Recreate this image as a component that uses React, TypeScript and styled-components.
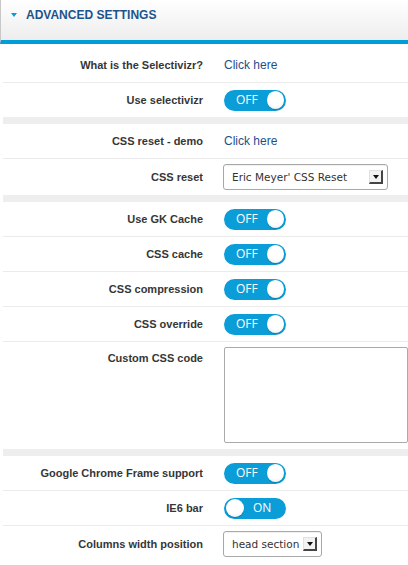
import React from 'react';
import styled, { createGlobalStyle } from 'styled-components';

const GlobalStyle = createGlobalStyle`
  html, body {
    margin: 0;
    padding: 0;
    background: #fff;
    overflow: hidden;
  }
  body {
    font-family: "Liberation Sans", Arial, sans-serif;
  }
`;

type Item =
  | { kind: 'link'; label: string }
  | { kind: 'toggle'; label: string; on?: boolean }
  | { kind: 'select'; label: string; value: string; width: number }
  | { kind: 'textarea'; label: string };

const sections: Item[][] = [
  [
    { kind: 'link', label: 'What is the Selectivizr?' },
    { kind: 'toggle', label: 'Use selectivizr' },
  ],
  [
    { kind: 'link', label: 'CSS reset - demo' },
    { kind: 'select', label: 'CSS reset', value: "Eric Meyer' CSS Reset", width: 165 },
  ],
  [
    { kind: 'toggle', label: 'Use GK Cache' },
    { kind: 'toggle', label: 'CSS cache' },
    { kind: 'toggle', label: 'CSS compression' },
    { kind: 'toggle', label: 'CSS override' },
    { kind: 'textarea', label: 'Custom CSS code' },
  ],
  [
    { kind: 'toggle', label: 'Google Chrome Frame support' },
    { kind: 'toggle', label: 'IE6 bar', on: true },
    { kind: 'select', label: 'Columns width position', value: 'head section', width: 99 },
  ],
];

const Toggle = ({ on }: { on?: boolean }) => (
  <Switch $on={on}>
    {on && <Knob />}
    <span>{on ? 'ON' : 'OFF'}</span>
    {!on && <Knob />}
  </Switch>
);

const Field = ({ item }: { item: Item }) => {
  switch (item.kind) {
    case 'link':
      return <Link href="#">Click here</Link>;
    case 'toggle':
      return <Toggle on={item.on} />;
    case 'select':
      return (
        <Select style={{ width: item.width }}>
          <span>{item.value}</span>
          <Arrow />
        </Select>
      );
    case 'textarea':
      return <TextArea />;
  }
};

const App = () => {
  return (
    <Panel>
      <GlobalStyle />
      <Header>
        <Caret />
        <Title>ADVANCED SETTINGS</Title>
      </Header>
      <Body>
        {sections.map((items, i) => (
          <Section key={i} $first={i === 0}>
            {items.map((item) => (
              <Row key={item.label} $tall={item.kind === 'select'} $top={item.kind === 'textarea'}>
                <Label $top={item.kind === 'textarea'}>{item.label}</Label>
                <Value>
                  <Field item={item} />
                </Value>
              </Row>
            ))}
          </Section>
        ))}
      </Body>
    </Panel>
  );
};

export default App;

const Panel = styled.div`
  width: 408px;
  height: 565px;
  overflow: hidden;
`;

const Header = styled.div`
  height: 44px;
  box-sizing: border-box;
  border-left: 1px solid #c8c8c8;
  border-bottom: 4px solid #009dd8;
  background: linear-gradient(#ffffff, #ededed);
  display: flex;
  align-items: center;
  padding: 0 0 10px 10px;
  gap: 9px;
`;

const Caret = styled.span`
  width: 0;
  height: 0;
  border-left: 3.5px solid transparent;
  border-right: 3.5px solid transparent;
  border-top: 4px solid #0a9bd6;
`;

const Title = styled.h2`
  margin: 0;
  font-size: 12px;
  line-height: 16px;
  font-weight: bold;
  color: #1b558c;
`;

const Body = styled.div`
  padding: 4px 0 0 3px;
`;

const Section = styled.div<{ $first?: boolean }>`
  border-top: ${(p) => (p.$first ? 'none' : '7px solid #eeeeee')};
  > div:last-child {
    border-bottom: none;
  }
`;

const Row = styled.div<{ $tall?: boolean; $top?: boolean }>`
  display: grid;
  grid-template-columns: 200px 184px;
  column-gap: 21px;
  align-items: ${(p) => (p.$top ? 'start' : 'center')};
  min-height: ${(p) => (p.$top ? 0 : p.$tall ? 36 : 34)}px;
  padding: ${(p) => (p.$top ? '5px 0 6px' : '0')};
  border-bottom: 1px solid #ebebeb;
`;

const Label = styled.div<{ $top?: boolean }>`
  text-align: right;
  font-size: 11px;
  line-height: 16px;
  font-weight: bold;
  color: #363636;
  margin-top: ${(p) => (p.$top ? '3px' : '0')};
  white-space: nowrap;
`;

const Value = styled.div`
  display: flex;
  align-items: center;
`;

const Link = styled.a`
  font-size: 12px;
  line-height: 16px;
  color: #1d4f8c;
  text-decoration: none;
`;

const Switch = styled.div<{ $on?: boolean }>`
  width: 62px;
  height: 21px;
  border-radius: 11px;
  background: #0a9dd8;
  display: flex;
  align-items: center;
  box-sizing: border-box;
  padding: ${(p) => (p.$on ? '0 0 0 2px' : '0 2px 0 12px')};
  gap: 9px;
  > span {
    color: #fff;
    font-size: 12px;
    line-height: 14px;
    font-family: "Open Sans", "Liberation Sans", sans-serif;
  }
`;

const Knob = styled.div`
  width: 18px;
  height: 18px;
  border-radius: 50%;
  background: radial-gradient(circle at 50% 35%, #ffffff 55%, #e6e6e6);
  box-shadow: 0 1px 1px rgba(0, 0, 0, 0.2);
  margin-left: auto;
  &:first-child {
    margin-left: 0;
  }
`;

const Select = styled.div`
  height: 26px;
  margin-left: -1px;
  border: 1px solid #a8a8a8;
  border-radius: 3px;
  background: #fff;
  box-sizing: border-box;
  display: flex;
  align-items: center;
  justify-content: space-between;
  padding: 0 4px 0 8px;
  font-family: "DejaVu Sans", sans-serif;
  font-size: 10.5px;
  white-space: nowrap;
  color: #333;
  box-shadow: inset 0 1px 1px rgba(0, 0, 0, 0.06);
`;

const Arrow = styled.span`
  width: 14px;
  height: 14px;
  box-sizing: border-box;
  background: #f2f2f2;
  border-top: 1px solid #e0e0e0;
  border-left: 1px solid #e0e0e0;
  border-right: 2px solid #444;
  border-bottom: 2px solid #444;
  display: flex;
  align-items: center;
  justify-content: center;
  &::after {
    content: '';
    border-left: 3px solid transparent;
    border-right: 3px solid transparent;
    border-top: 4px solid #111;
  }
`;

const TextArea = styled.textarea`
  display: block;
  width: 200px;
  height: 96px;
  margin: 0;
  border: 1px solid #aaaaaa;
  border-radius: 2px;
  resize: none;
  box-sizing: border-box;
`;
